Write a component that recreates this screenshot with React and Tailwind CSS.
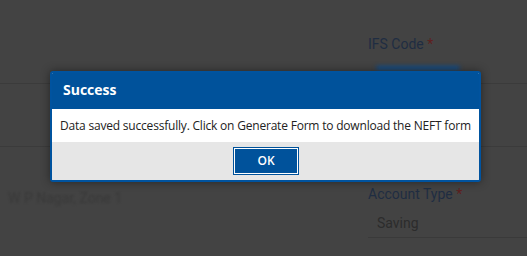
import React from 'react';

export default function App() {
  return (
    <div className="relative w-[527px] h-[256px] overflow-hidden bg-[#434343]" style={{ fontFamily: '"Open Sans", sans-serif' }}>
      {/* page behind the overlay */}
      <div className="flex flex-col">
        <div className="h-[84px] border-b border-[#3b3b3b] flex">
          <div className="w-[368px]" />
          <div className="pt-[34px] flex flex-col">
            <span className="text-[14px] leading-[20px] text-[#1f2d42]" style={{ fontFamily: 'Roboto, sans-serif' }}>
              IFS Code <span className="text-[#5e1f1f]">*</span>
            </span>
            <div className="mt-[12px] ml-[8px] w-[84px] h-[4px] rounded-full bg-[#0c4f92] blur-[2px]" />
          </div>
        </div>
        <div className="h-[63px] border-b border-[#3b3b3b]" />
        <div className="flex">
          <div className="w-[368px] pt-[38px] pl-[8px]">
            <span className="text-[14px] text-[#393939] blur-[1px]" style={{ fontFamily: 'Roboto, sans-serif' }}>
              W P Nagar, Zone 1
            </span>
          </div>
          <div className="flex-1 pt-[37px] flex flex-col">
            <span className="text-[14px] leading-[20px] text-[#1f2d42]" style={{ fontFamily: 'Roboto, sans-serif' }}>
              Account Type <span className="text-[#5e1f1f]">*</span>
            </span>
            <div className="h-[34px] border-b border-[#3a3a3a] pl-[9px] pt-[6px]">
              <span className="text-[14px] text-[#2c2c2c]" style={{ fontFamily: 'Roboto, sans-serif' }}>Saving</span>
            </div>
          </div>
        </div>
      </div>

      {/* modal */}
      <div className="absolute left-[50px] top-[71px] w-[431px] h-[111px] flex flex-col rounded-[3px] border-2 border-[#00539f] bg-white overflow-hidden shadow-[0_0_10px_rgba(0,0,0,0.45)]">
        <div className="h-[36px] bg-[#00529b] flex items-center pl-[11px] pb-[3px]">
          <span className="text-white font-bold text-[14px]">Success</span>
        </div>
        <div className="h-[33px] flex items-center pl-[8px]">
          <span className="text-[12px] text-[#222] tracking-[-0.2px]">
            Data saved successfully. Click on Generate Form to download the NEFT form
          </span>
        </div>
        <div className="flex-1 bg-[#e6e6e6] flex justify-center pt-[5px] pl-[1px]">
          <button className="w-[66px] h-[28px] border border-[#00529b] bg-white p-[1px]">
            <div className="w-full h-full bg-[#00529b] flex items-center justify-center text-white text-[12px] font-semibold">
              OK
            </div>
          </button>
        </div>
      </div>
    </div>
  );
}
